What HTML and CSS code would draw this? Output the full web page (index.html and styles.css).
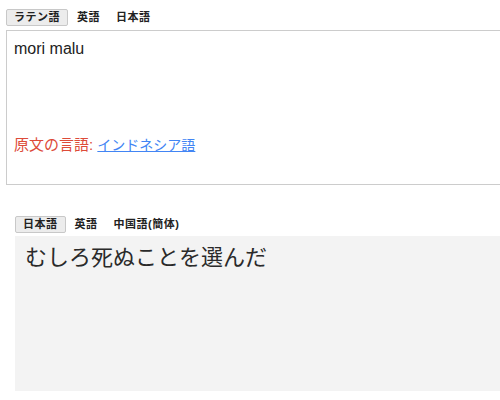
FILE: index.html
```html
<!DOCTYPE html>
<html lang="ja">
<head>
<meta charset="utf-8">
<link rel="stylesheet" href="styles.css">
</head>
<body>
<div class="src">
  <div class="tabs">
    <span class="tab sel">ラテン語</span>
    <span class="tab">英語</span>
    <span class="tab">日本語</span>
  </div>
  <div class="srcbox">
    <div class="input">mori malu</div>
    <div class="detect">原文の言語: <a href="#">インドネシア語</a></div>
  </div>
</div>
<div class="dst">
  <div class="tabs">
    <span class="tab sel">日本語</span>
    <span class="tab">英語</span>
    <span class="tab">中国語(簡体)</span>
  </div>
  <div class="result">むしろ死ぬことを選んだ</div>
</div>
</body>
</html>
```
FILE: styles.css
```css
html, body { margin: 0; padding: 0; background: #fff; }
body { font-family: Arial, "Liberation Sans", "Noto Sans CJK JP", sans-serif; color: #222; width: 520px; }
.src { padding: 9px 0 0 6px; }
.tabs { display: flex; align-items: center; height: 17px; font-size: 11px; font-weight: bold; letter-spacing: 0.5px; }
.tab { padding: 0 7px; line-height: 15px; color: #222; border: 1px solid transparent; border-radius: 2px; }
.tab.sel { background: #ececec; border-color: #c8c8c8; margin-right: 1px; }
.srcbox { margin-top: 4px; border: 1px solid #ccc; height: 155px; padding: 8px 0 0 7px; box-sizing: border-box; }
.input { font-size: 16px; line-height: 20px; color: #222; height: 94px; }
.detect { font-size: 15px; color: #dd4b39; }
.detect a { color: #4285f4; font-size: 14px; }
.dst { padding: 31px 0 0 15px; }
.result { margin-top: 3px; background: #f3f3f3; height: 155px; padding: 8px 10px 0; box-sizing: border-box; font-size: 22px; line-height: 28px; color: #2a2a2a; }
```
